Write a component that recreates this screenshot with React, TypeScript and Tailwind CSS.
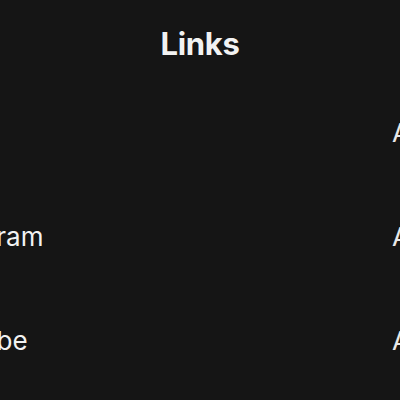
import React from 'react';

interface LinkRow {
  label: string;
  action: string;
}

const rows: LinkRow[] = [
  { label: 'Blog', action: 'Add' },
  { label: 'Instagram', action: 'Add' },
  { label: 'YouTube', action: 'Add' },
];

const App: React.FC = () => {
  return (
    <div className="w-[400px] h-[400px] overflow-hidden bg-[#151515] text-[#f2f2f2] font-['Inter','Liberation_Sans',sans-serif]">
      <div className="pt-[25px]">
        <h1 className="text-center text-[31px] leading-[37px] font-bold tracking-[-0.3px]">Links</h1>
      </div>

      <div className="mt-[19px] ml-[-79px]">
        {rows.map((row) => (
          <div key={row.label} className="flex items-center h-[104px] text-[26px] leading-[32px]">
            <span className="w-[471px] shrink-0 whitespace-nowrap">{row.label}</span>
            <span className="whitespace-nowrap text-[#e8e8e8]">{row.action}</span>
          </div>
        ))}
      </div>
    </div>
  );
};

export default App;
